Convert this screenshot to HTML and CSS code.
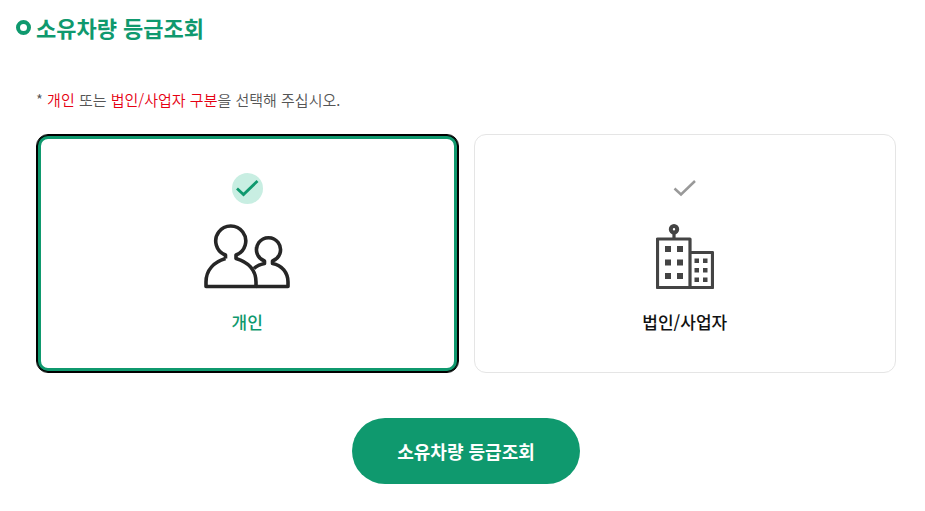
FILE: index.html
```html
<!DOCTYPE html>
<html lang="ko">
<head>
<meta charset="utf-8">
<meta name="viewport" content="width=device-width, initial-scale=1">
<title>소유차량 등급조회</title>
<link rel="stylesheet" href="styles.css">
</head>
<body>
<main class="page">
  <h1 class="title">소유차량 등급조회</h1>
  <form class="lookup">
    <p class="note">* <em>개인</em> 또는 <em>법인/사업자 구분</em>을 선택해 주십시오.</p>
    <div class="choices">
      <button type="button" class="card selected" aria-pressed="true">
        <span class="check">
          <svg width="31" height="31" viewBox="0 0 31 31" aria-hidden="true"><path d="M5 15.500l6.500 6L25.500 8"/></svg>
        </span>
        <svg class="picture people" width="86" height="66" viewBox="0 0 86 66" aria-hidden="true">
          <path d="M21.500 34.500v-3.500A15 15 0 1 1 32 31V34.500C44 38 52 46 52 58v4.500H2V58C2 46 10 38 21.500 34.500"/>
          <path d="M50 44.500C53 41.500 56 40.500 60.500 39.500V37A12 12 0 1 1 68.500 37V39.500C78 41 84 49 84 58v4.500h-32"/>
        </svg>
        <span class="label">개인</span>
      </button>
      <button type="button" class="card" aria-pressed="false">
        <span class="check">
          <svg width="31" height="31" viewBox="0 0 31 31" aria-hidden="true"><path d="M5.500 15.500l6.500 6L26 8"/></svg>
        </span>
        <svg class="picture" width="58" height="66" viewBox="0 0 58 66" aria-hidden="true">
          <path class="wall" d="M1.500 15h32.500v48.500H1.500zM34 28.500h22.500v35H34M18 9v5"/>
          <circle class="wall ball" cx="18" cy="5.300" r="3.200"/>
          <path class="windows" d="M9 22h6v6H9zM21 22h6v6h-6zM9 35.500h6v6H9zM21 35.500h6v6h-6zM9 49h6v6H9zM21 49h6v6h-6zM38.500 34.500h4.500v4.500h-4.500zM47 34.500h4.500v4.500H47zM38.500 44h4.500v4.500h-4.500zM47 44h4.500v4.500H47zM38.500 53.500h4.500v4.500h-4.500zM47 53.500h4.500v4.500H47z"/>
        </svg>
        <span class="label">법인/사업자</span>
      </button>
    </div>
    <button type="submit" class="submit">소유차량 등급조회</button>
  </form>
</main>
</body>
</html>
```
FILE: styles.css
```css
:root {
  --green: #0f996e;
}

*,
*::before {
  box-sizing: border-box;
}

body {
  margin: 0;
  background: #fff;
  color: #555;
  font-family: "Noto Sans CJK KR", sans-serif;
}

button {
  font: inherit;
  cursor: pointer;
}

.page {
  padding: 12px 29px 24px 16px;
}

.title {
  display: flex;
  align-items: center;
  gap: 5px;
  margin: 0;
  color: var(--green);
  font-size: 22px;
  font-weight: 700;
  line-height: 30px;
}

.title::before {
  content: "";
  width: 15px;
  height: 15px;
  border: 4px solid var(--green);
  border-radius: 50%;
}

.lookup {
  display: flex;
  flex-direction: column;
  margin-top: 46px;
  padding-left: 20px;
}

.note {
  margin: 0 0 22px;
  font-size: 15px;
  font-weight: 350;
  line-height: 24px;
}

.note em {
  color: #e60012;
  font-style: normal;
}

.choices {
  display: grid;
  grid-template-columns: 1fr 1fr;
  gap: 15px;
}

.card {
  display: flex;
  flex-direction: column;
  align-items: center;
  padding: 38px 16px;
  border: 1px solid #e5e5e5;
  border-radius: 12px;
  background: #fff;
  color: #111;
}

.card.selected {
  border-color: #000;
  box-shadow: inset 0 0 0 1px #000, inset 0 0 0 4px var(--green);
  color: var(--green);
}

.check {
  display: flex;
  border-radius: 50%;
}

.check svg {
  fill: none;
  stroke: #999;
  stroke-width: 2.5;
}

.selected .check {
  background: #c8eee2;
}

.selected .check svg {
  stroke: var(--green);
  stroke-width: 2.8;
}

.picture {
  margin: 20px 0;
}

.people {
  fill: none;
  stroke: #262626;
  stroke-width: 3.600;
  stroke-linejoin: round;
}

.wall {
  fill: none;
  stroke: #444;
  stroke-width: 3.200;
  stroke-linejoin: round;
}

.ball {
  stroke-width: 4;
}

.windows {
  fill: #444;
}

.label {
  font-size: 17px;
  font-weight: 500;
  line-height: 24px;
}

.submit {
  align-self: center;
  height: 66px;
  margin-top: 45px;
  padding: 0 45px;
  border: 0;
  border-radius: 33px;
  background: var(--green);
  color: #fff;
  font-size: 18px;
  font-weight: 700;
}
```
